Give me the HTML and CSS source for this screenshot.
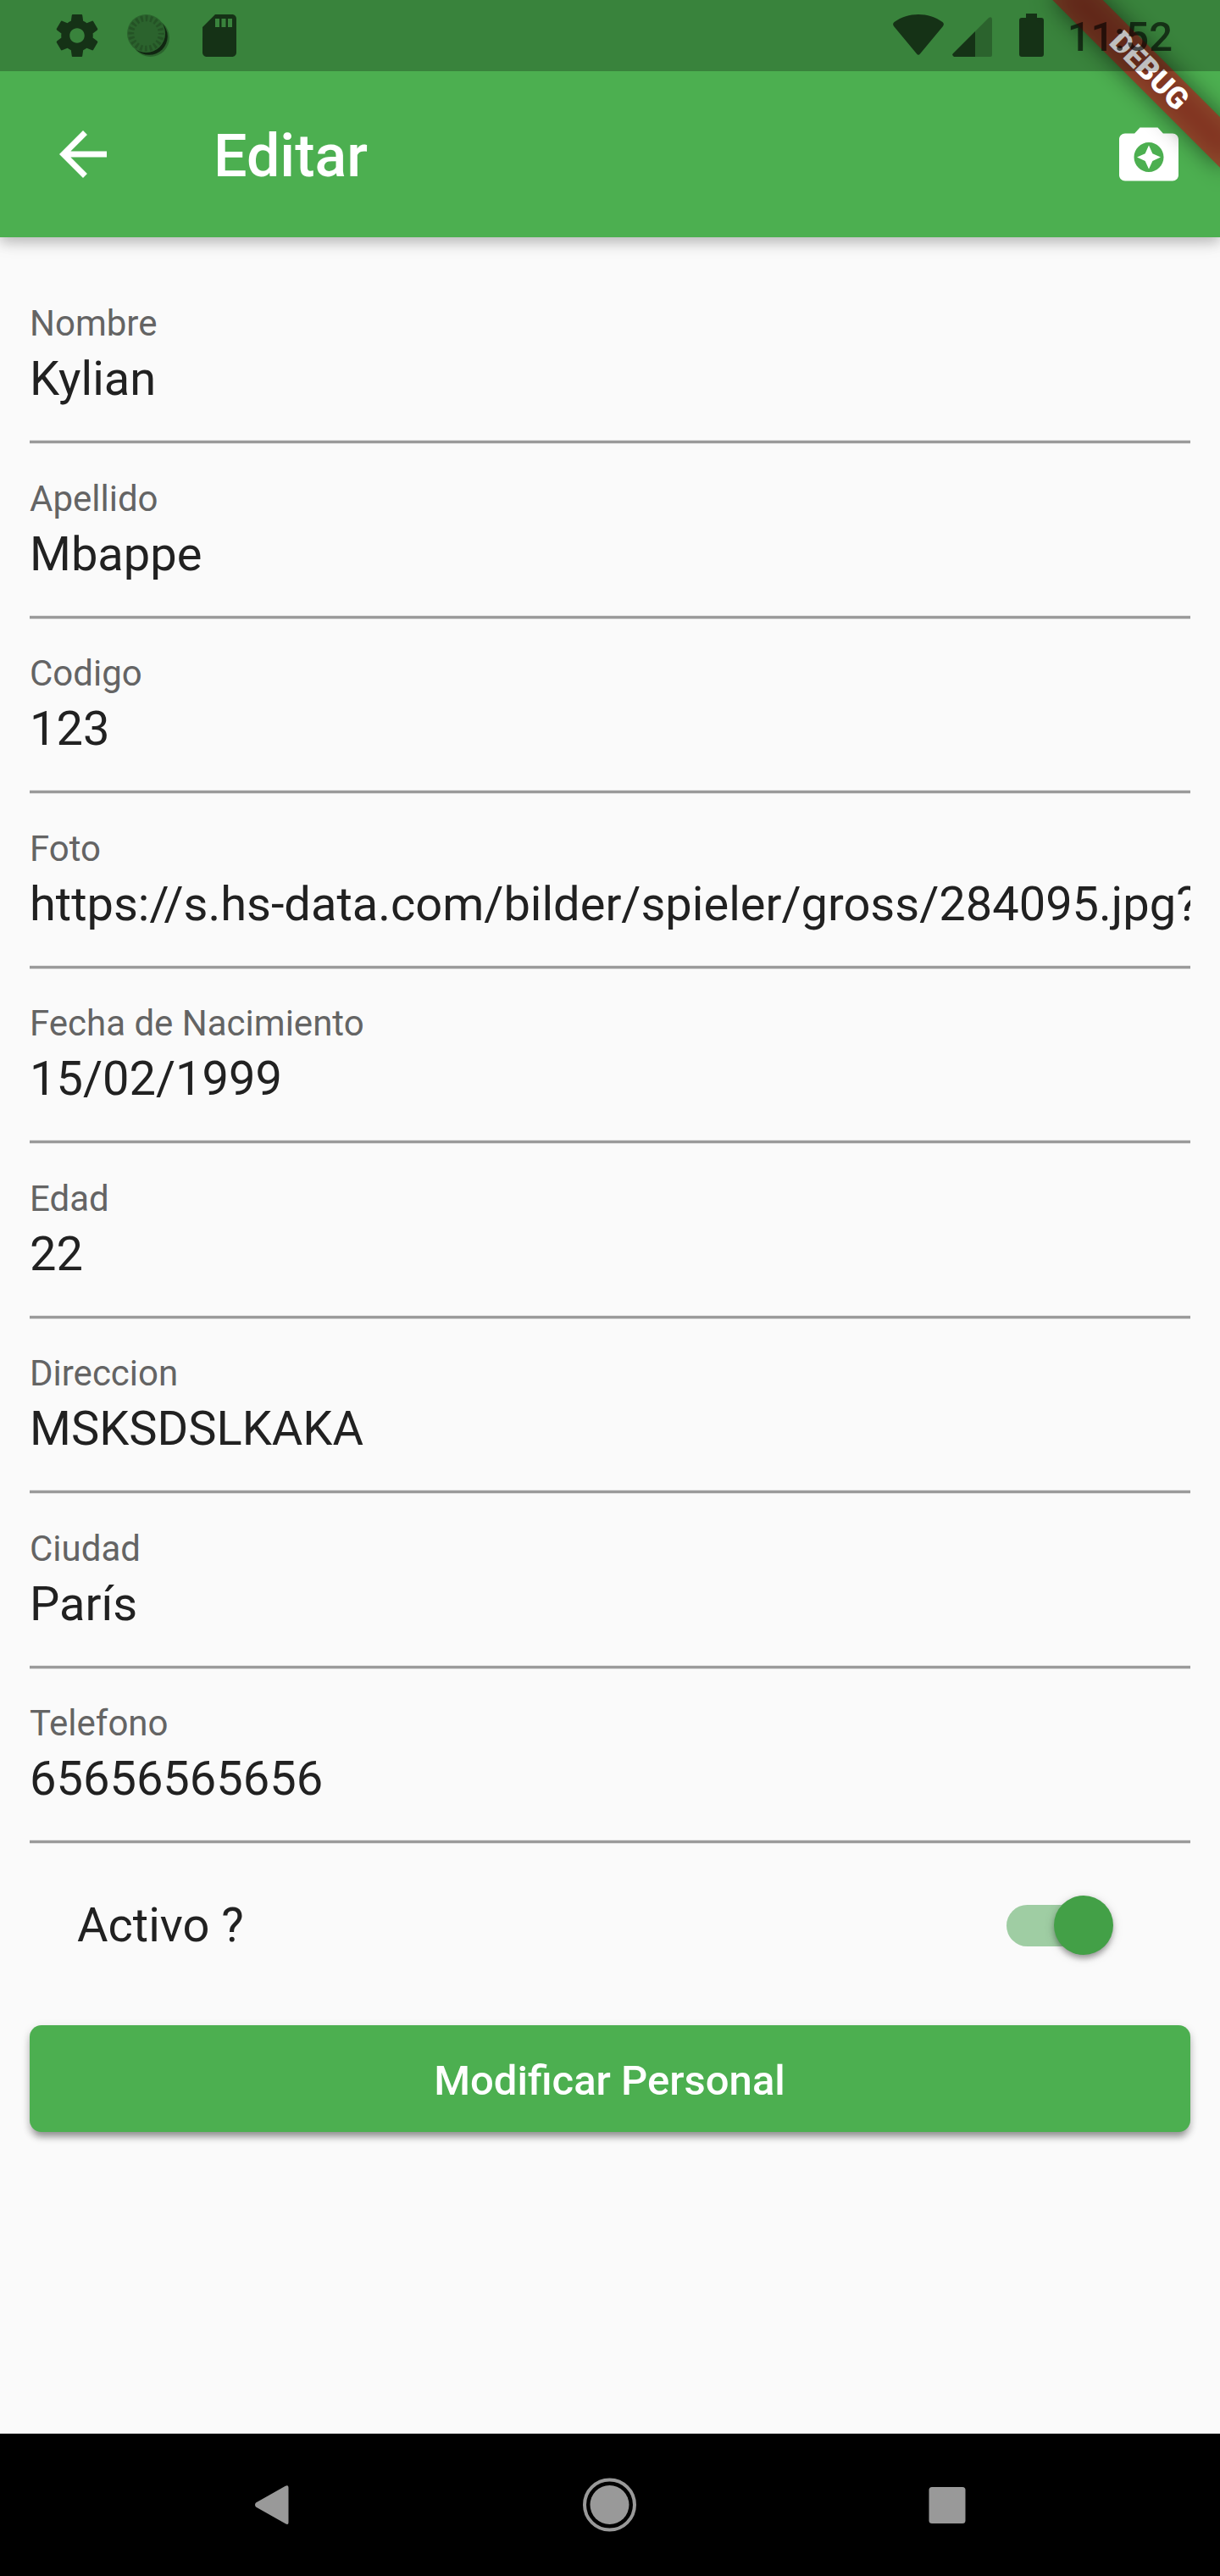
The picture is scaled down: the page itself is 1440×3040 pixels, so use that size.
FILE: index.html
```html
<!DOCTYPE html>
<html lang="es">
<head>
<meta charset="utf-8">
<title>Editar</title>
<link rel="stylesheet" href="styles.css">
</head>
<body>
<div class="screen">
  <header class="app-header">
    <div class="status-space"></div>
    <div class="app-bar">
      <svg class="icon" viewBox="0 0 24 24"><path d="M20 11H7.83l5.59-5.59L12 4l-8 8 8 8 1.41-1.41L7.83 13H20v-2z"/></svg>
      <h1 class="title">Editar</h1>
      <svg class="icon" viewBox="0 0 24 24"><path fill-rule="evenodd" d="M20 5h-3.17L15 3H9L7.17 5H4c-1.1 0-2 .9-2 2v12c0 1.1.9 2 2 2h16c1.1 0 2-.9 2-2V7c0-1.1-.9-2-2-2zM12 18c-2.76 0-5-2.24-5-5s2.24-5 5-5 5 2.24 5 5-2.24 5-5 5z"/><path d="M12 17l1.25-2.75L16 13l-2.75-1.25L12 9l-1.25 2.75L8 13l2.75 1.25z"/></svg>
    </div>
  </header>

  <div class="debug-corner">
    <div class="debug-shadow"></div>
    <div class="debug-banner">DEBUG</div>
  </div>

  <div class="status-bar">
    <div class="status-group status-left">
      <svg width="50" height="50" viewBox="2 2 20 20"><path d="M19.43 12.98c.04-.32.07-.64.07-.98s-.03-.66-.07-.98l2.11-1.65c.19-.15.24-.42.12-.64l-2-3.46c-.12-.22-.39-.3-.61-.22l-2.49 1c-.52-.4-1.08-.73-1.69-.98l-.38-2.65C14.46 2.18 14.25 2 14 2h-4c-.25 0-.46.18-.49.42l-.38 2.65c-.61.25-1.17.59-1.69.98l-2.49-1c-.23-.09-.49 0-.61.22l-2 3.46c-.13.22-.07.49.12.64l2.11 1.65c-.04.32-.07.65-.07.98s.03.66.07.98l-2.11 1.65c-.19.15-.24.42-.12.64l2 3.46c.12.22.39.3.61.22l2.49-1c.52.4 1.08.73 1.69.98l.38 2.65c.03.24.24.42.49.42h4c.25 0 .46-.18.49-.42l.38-2.65c.61-.25 1.17-.59 1.69-.98l2.49 1c.23.09.49 0 .61-.22l2-3.46c.12-.22.07-.49-.12-.64zM12 15.5c-1.93 0-3.5-1.57-3.5-3.5s1.57-3.5 3.5-3.5 3.5 1.57 3.5 3.5-1.57 3.5-3.5 3.5z"/></svg>
      <svg class="sync" width="50" height="50" viewBox="0 0 50 50"><mask id="rim"><rect width="50" height="50" fill="#fff"/><circle cx="22.500" cy="22.500" r="22.500" fill="#000"/></mask><circle class="soft" cx="22.5" cy="22.5" r="22.5"/><circle class="ticks" cx="22.5" cy="22.5" r="17.8"/><g mask="url(#rim)"><circle class="soft" cx="27.500" cy="27.500" r="22.500"/><circle cx="26" cy="26" r="21.800"/></g></svg>
      <svg class="sd" width="40" height="50" viewBox="4 2 16 20"><path d="M18 2h-8L4.020 8 4 20c0 1.100.900 2 2 2h12c1.100 0 2-.900 2-2V4c0-1.100-.900-2-2-2zm-6 6h-2V4h2v4zm3 0h-2V4h2v4zm3 0h-2V4h2v4z"/></svg>
    </div>
    <div class="status-group status-right">
      <svg width="60" height="50" viewBox="0 0 60 50"><path d="M1.500 9C18-3 42-3 58.500 9Q61 11 59 14L32 46.500Q30 49 28 46.500L1 14Q-1 11 1.500 9z"/></svg>
      <svg class="signal" width="48" height="50" viewBox="0 0 48 50"><path d="M27 20V50H2Q-1 48 1 46z"/><path class="soft" d="M27 20L43 4Q47 2 47 6V48Q47 50 45 50H27z"/></svg>
      <svg class="battery" width="29" height="51" viewBox="0 0 29 51"><path d="M8 0h13v5h5q3 0 3 3v40q0 3-3 3H3q-3 0-3-3V8q0-3 3-3h5z"/></svg>
      <span class="clock">11:52</span>
    </div>
  </div>

  <main class="form">
    <div class="field"><div class="label">Nombre</div><div class="value">Kylian</div></div>
    <div class="field"><div class="label">Apellido</div><div class="value">Mbappe</div></div>
    <div class="field"><div class="label">Codigo</div><div class="value">123</div></div>
    <div class="field"><div class="label">Foto</div><div class="value">https://s.hs-data.com/bilder/spieler/gross/284095.jpg?</div></div>
    <div class="field"><div class="label">Fecha de Nacimiento</div><div class="value">15/02/1999</div></div>
    <div class="field"><div class="label">Edad</div><div class="value">22</div></div>
    <div class="field"><div class="label">Direccion</div><div class="value">MSKSDSLKAKA</div></div>
    <div class="field"><div class="label">Ciudad</div><div class="value">París</div></div>
    <div class="field"><div class="label">Telefono</div><div class="value">65656565656</div></div>
    <div class="switch-row">
      <span class="switch-label">Activo ?</span>
      <div class="switch"><div class="thumb"></div></div>
    </div>
    <button class="submit" type="button">Modificar Personal</button>
  </main>

  <nav class="nav-bar">
    <svg width="64" height="64" viewBox="0 0 64 64"><path d="M12 34.500Q10 32 12 29.500L46.500 10Q50.500 8 50.500 11.500V53Q50.500 56.500 46.500 54z"/></svg>
    <svg width="64" height="64" viewBox="0 0 64 64"><circle cx="31.500" cy="32" r="23"/><circle class="ring" cx="31.500" cy="32" r="29.500"/></svg>
    <svg width="64" height="64" viewBox="0 0 64 64"><rect x="10.500" y="11" width="43" height="43" rx="3.500"/></svg>
  </nav>
</div>
</body>
</html>
```
FILE: styles.css
```css
* { box-sizing: border-box; }

body {
  margin: 0;
  background: #fafafa;
  font-family: Roboto, "Liberation Sans", sans-serif;
  color: #212121;
}

.screen {
  position: relative;
  display: flex;
  flex-direction: column;
  width: 1440px;
  height: 3040px;
  overflow: hidden;
}

/* App bar */
.app-header {
  background: #4caf50;
  box-shadow: 0 6px 14px rgba(0, 0, 0, .2), 0 4px 24px rgba(0, 0, 0, .1);
}
.status-space { height: 84px; }
.app-bar {
  display: flex;
  align-items: center;
  height: 196px;
  padding: 0 42px 0 56px;
}
.icon {
  width: 84px;
  height: 84px;
  fill: #fff;
}
.title {
  flex: 1;
  margin: 0 0 0 112px;
  padding-top: 4px;
  color: #fff;
  font-size: 70px;
  font-weight: 500;
  line-height: 82px;
}

/* Corner ribbon */
.debug-corner {
  position: absolute;
  top: 0;
  right: 0;
  width: 300px;
  height: 300px;
  overflow: hidden;
}
.debug-shadow,
.debug-banner {
  position: absolute;
  left: 76px;
  top: 63px;
  width: 280px;
  height: 42px;
  transform: rotate(45deg);
}
.debug-shadow {
  background: rgba(0, 0, 0, .5);
  filter: blur(13.9px);
}
.debug-banner {
  background: rgba(183, 28, 28, .627);
  color: #fff;
  font-size: 35.7px;
  font-weight: 900;
  line-height: 41px;
  text-align: center;
}

/* System status bar */
.status-bar {
  position: absolute;
  top: 0;
  left: 0;
  display: flex;
  justify-content: space-between;
  width: 100%;
  height: 84px;
  padding: 16px 56px 0 66px;
  background: rgba(0, 0, 0, .25);
  color: rgba(0, 0, 0, .62);
}
.status-bar svg { fill: rgba(0, 0, 0, .62); }
.status-bar .soft { fill: rgba(0, 0, 0, .24); }
.status-bar .ticks {
  fill: none;
  stroke: rgba(0, 0, 0, .16);
  stroke-width: 7;
  stroke-dasharray: 2.8 2.792;
  stroke-dashoffset: 1.4;
}
.status-group { display: flex; align-items: flex-start; }
.status-left svg { margin-top: 1px; }
.sync { margin-left: 34px; }
.sd { margin-left: 39px; }
.status-right svg { margin-top: 1px; }
.status-right .signal { margin-left: 10px; }
.status-right .battery { margin: 0 0 0 31px; }
.clock {
  margin-left: 28px;
  font-size: 49px;
  font-weight: 500;
  line-height: 56px;
}

/* Form */
.form {
  flex: 1;
  padding: 37.5px 35px 0;
}
.field {
  height: 206.5px;
  padding-top: 39.9px;
  background: linear-gradient(#e3e3e3 0 1px, #9a9a9a 1px 4px, #e3e3e3 4px 5px) bottom / 100% 5px no-repeat;
}
.label {
  height: 49px;
  color: #646464;
  font-size: 42px;
  line-height: 49px;
}
.value {
  height: 72px;
  margin-top: 8px;
  overflow: hidden;
  font-size: 56px;
  line-height: 66px;
  white-space: nowrap;
}
.switch-row {
  display: flex;
  align-items: center;
  justify-content: space-between;
  height: 192px;
  padding: 0 91px 0 56px;
}
.switch-label {
  font-size: 56px;
  line-height: 66px;
}
.switch {
  display: flex;
  align-items: center;
  justify-content: flex-end;
  width: 126px;
  height: 49px;
  border-radius: 25px;
  background: linear-gradient(90deg, #9fcda3 80%, transparent 80%);
}
.thumb {
  width: 70px;
  height: 70px;
  flex: none;
  border-radius: 50%;
  background: #43a047;
  box-shadow: 0 7px 7px -3px rgba(0, 0, 0, .2), 0 3px 7px rgba(0, 0, 0, .2), 0 3px 14px rgba(0, 0, 0, .12);
}
.submit {
  display: block;
  width: 100%;
  height: 126px;
  margin-top: 22px;
  padding: 5px 1px 0 0;
  border: 0;
  border-radius: 14px;
  background: #4caf50;
  box-shadow: 0 10px 7px -6px rgba(0, 0, 0, .2), 0 7px 8px rgba(0, 0, 0, .2), 0 3px 12px rgba(0, 0, 0, .12);
  color: #fff;
  font-family: inherit;
  font-size: 49px;
  font-weight: 500;
}

/* System navigation */
.nav-bar {
  display: flex;
  align-items: center;
  justify-content: center;
  gap: 334px;
  height: 168px;
  background: #000;
}
.nav-bar svg { fill: #999; }
.nav-bar .ring {
  fill: none;
  stroke: #999;
  stroke-width: 4;
}
```
